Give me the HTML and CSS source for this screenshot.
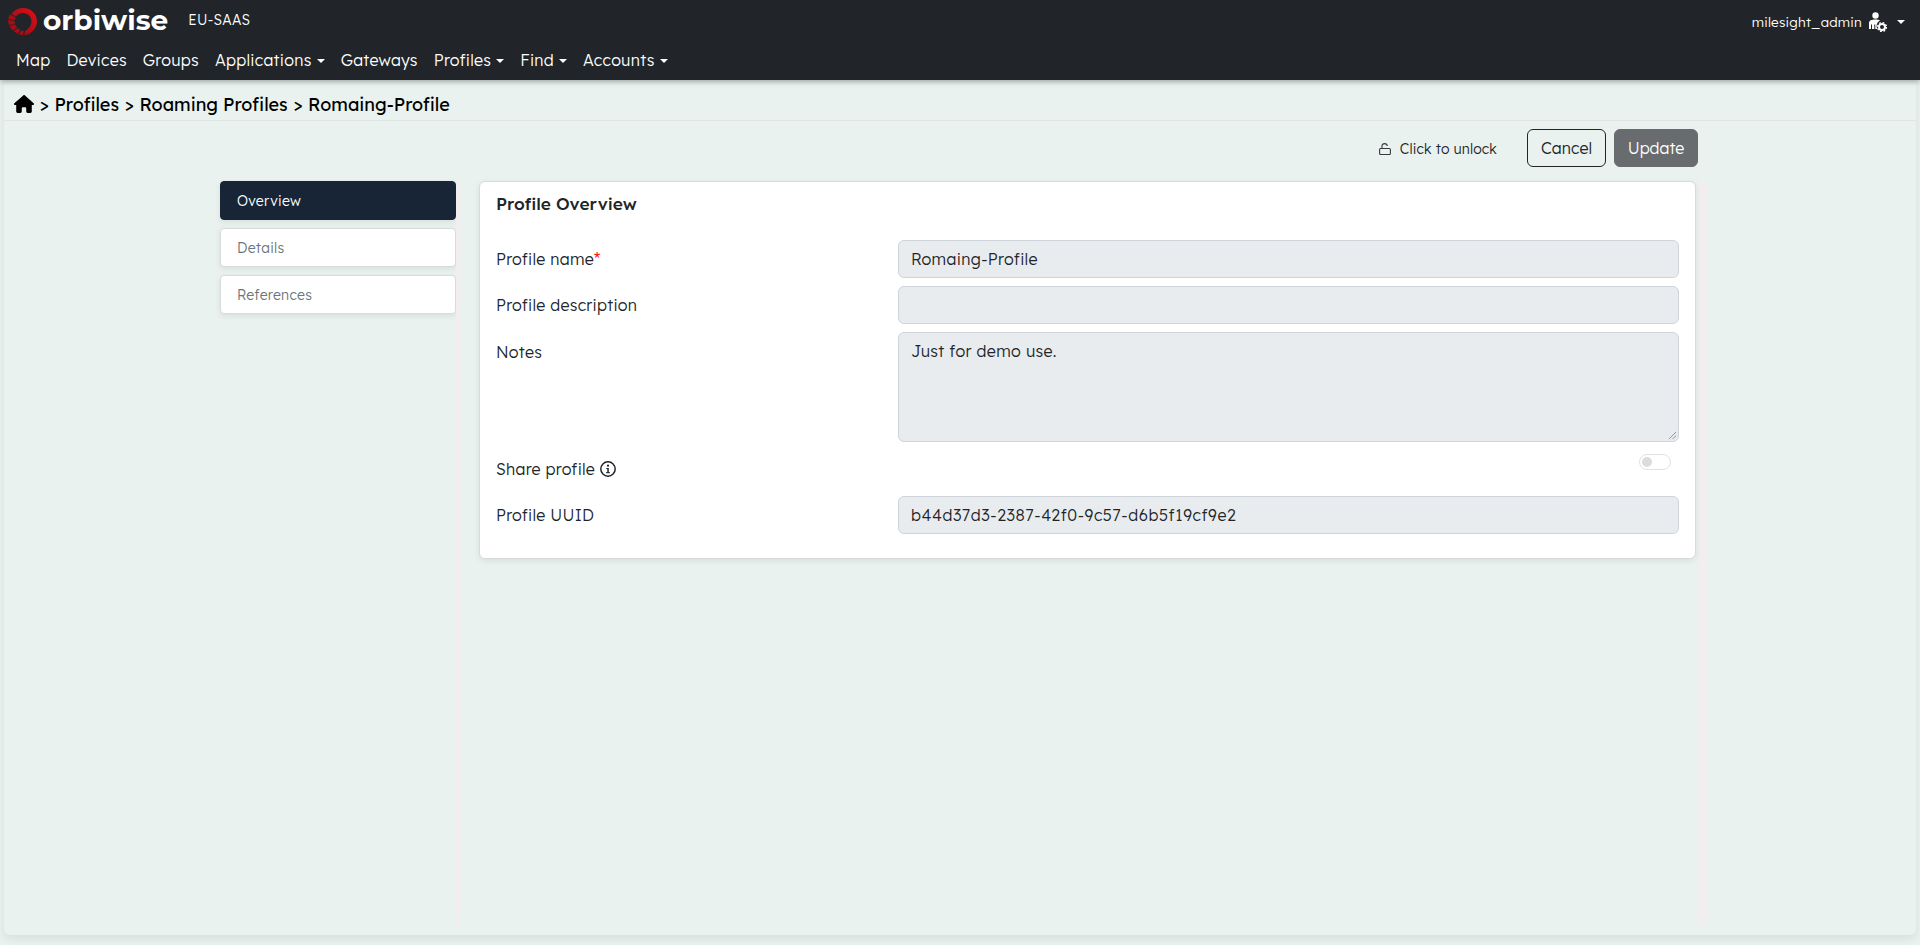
FILE: index.html
```html
<!DOCTYPE html>
<html lang="en">
<head>
<meta charset="utf-8">
<title>Roaming Profile</title>
<link rel="stylesheet" href="styles.css">
</head>
<body>
<header class="topbar">
  <div class="brand-row">
    <div class="brand">
      <svg class="logo-mark" viewBox="0 0 29 27" aria-hidden="true">
        <defs>
          <linearGradient id="ring" x1="1" y1="0" x2="0" y2="1">
            <stop offset="0" stop-color="#e01017"/>
            <stop offset="1" stop-color="#8f0c13"/>
          </linearGradient>
        </defs>
        <path d="M4 5C7 1.500 11 0 15 0C23 0 29 6 29 13C29 19 25.500 23.500 20 26.500L18.500 22C21.500 20 23.500 17 23.500 13.500C23.500 8.500 19.500 5 15 5C12 5 9.500 6.300 8 8.500L3.500 6Z" fill="url(#ring)"/>
        <path d="M1.500 6.500L7.500 9L6.800 12.200L.3 10.800ZM0 11.800L6.500 13L7.200 16.200L.8 16.800ZM1.500 17.800L7.500 16.800L9.200 19.700L4.200 22.500ZM5.500 23L10 20.200L12.200 21.800L10 26ZM11 26.500L13.300 22.300L15.700 23L15.200 27ZM16.300 27L16.800 23L19 22.300L20 26.500Z" fill="#a50e15"/>
      </svg>
      <span class="logo-word">orbiwise</span>
      <span class="tenant">EU-SAAS</span>
    </div>
    <div class="user">
      <span>milesight_admin</span>
      <svg class="user-icon" viewBox="0 0 18 20" aria-hidden="true">
        <circle cx="6.500" cy="3.500" r="3.200" fill="#fff"/>
        <path d="M0 17V11C0 8.500 2.500 7.500 6.500 7.500C8.500 7.500 10 7.800 11 8.400C9 9.600 7.600 11.500 7.600 14C7.600 15.100 7.800 16.100 8.300 17H6.300V12.500H5.300V17H3V12.500H2V17Z" fill="#fff"/>
        <circle cx="13" cy="15" r="3" fill="none" stroke="#fff" stroke-width="2"/>
        <circle cx="13" cy="15" r="4.500" fill="none" stroke="#fff" stroke-width="1.300" stroke-dasharray="1.800 1.730"/>
      </svg>
      <span class="caret user-caret"></span>
    </div>
  </div>
  <nav class="menu">
    <a>Map</a>
    <a>Devices</a>
    <a>Groups</a>
    <a>Applications<span class="caret"></span></a>
    <a>Gateways</a>
    <a>Profiles<span class="caret"></span></a>
    <a>Find<span class="caret"></span></a>
    <a>Accounts<span class="caret"></span></a>
  </nav>
</header>

<main class="page">
  <div class="crumbs">
    <svg class="home" viewBox="0 0 576 512" aria-hidden="true">
      <path d="M575.800 255.500c0 18-15 32.100-32 32.100h-32l.7 160.200c0 2.700-.2 5.400-.5 8.100V472c0 22.100-17.900 40-40 40H456c-1.100 0-2.200 0-3.300-.1c-1.400 .1-2.800 .1-4.200 .1H416 392c-22.100 0-40-17.900-40-40V448 384c0-17.700-14.300-32-32-32H256c-17.700 0-32 14.300-32 32v64 24c0 22.100-17.900 40-40 40H160 128.100c-1.500 0-3-.1-4.500-.2c-1.200 .1-2.400 .2-3.600 .2H104c-22.100 0-40-17.900-40-40V360c0-.9 0-1.900 .1-2.800V287.600H32c-18 0-32-14-32-32.100c0-9 3-17 10-24L266.400 8c7-7 15-8 22-8s15 2 21 7L564.800 231.500c8 7 12 15 11 24z" fill="#000"/>
    </svg>
    <span class="sep">&gt;</span><span>Profiles</span><span class="sep">&gt;</span><span>Roaming Profiles</span><span class="sep">&gt;</span><span>Romaing-Profile</span>
  </div>

  <div class="actions">
    <div class="unlock">
      <svg class="lock" viewBox="0 0 12 12" aria-hidden="true">
        <path d="M3 5.500V3C3 1.600 4.100 .6 5.600 .6S8.200 1.600 8.200 3" fill="none" stroke="#343a40" stroke-width="1.100"/>
        <rect x=".6" y="5.500" width="10.800" height="6" rx="1" fill="none" stroke="#343a40" stroke-width="1.100"/>
      </svg>
      <span>Click to unlock</span>
    </div>
    <button class="btn btn-cancel" type="button">Cancel</button>
    <button class="btn btn-update" type="button">Update</button>
  </div>

  <div class="layout">
    <aside class="tabs">
      <div class="tab tab-active">Overview</div>
      <div class="tab">Details</div>
      <div class="tab">References</div>
    </aside>
    <div class="panel-column">
      <div class="panel-inner">
        <section class="card">
          <h2 class="card-title">Profile Overview</h2>
          <div class="form">
            <label class="row">
              <span class="label">Profile name<span class="req">*</span></span>
              <span class="input">Romaing-Profile</span>
            </label>
            <label class="row">
              <span class="label">Profile description</span>
              <span class="input"></span>
            </label>
            <label class="row row-top">
              <span class="label">Notes</span>
              <span class="input textarea">Just for demo use.
                <svg class="grip" viewBox="0 0 10 10" aria-hidden="true"><path d="M1 9L9 1M5 9L9 5" stroke="#555" stroke-width="1" stroke-dasharray="1 .6" fill="none"/></svg>
              </span>
            </label>
            <div class="row row-share">
              <span class="label">Share profile
                <svg class="info" viewBox="0 0 16 16" aria-hidden="true">
                  <circle cx="8" cy="8" r="7.200" fill="none" stroke="#212529" stroke-width="1.500"/>
                  <circle cx="8" cy="4.700" r="1.100" fill="#212529"/>
                  <path d="M6.300 7H8.800V11.200H10V12.200H6V11.200H7.300V8H6.300Z" fill="#212529"/>
                </svg>
              </span>
              <span class="switch"><span class="knob"></span></span>
            </div>
            <label class="row">
              <span class="label">Profile UUID</span>
              <span class="input input-uuid">b44d37d3-2387-42f0-9c57-d6b5f19cf9e2</span>
            </label>
          </div>
        </section>
      </div>
    </div>
  </div>
</main>
</body>
</html>
```
FILE: styles.css
```css
* { box-sizing: border-box; }
html, body { height: 100%; }
body {
  margin: 0;
  height: 945px;
  overflow: hidden;
  background: #e9f2ee;
  color: #212529;
  font-family: "Lexend", "Lato", "Noto Sans", sans-serif;
  font-size: 16px;
  font-weight: 300;
  letter-spacing: .27px;
}
.topbar {
  position: relative;
  z-index: 2;
  height: 80px;
  background: #212529;
  color: #fff;
  box-shadow: 0 2px 5px rgba(0,0,0,.3);
}
.brand-row {
  height: 40px;
  display: flex;
  justify-content: space-between;
  align-items: center;
}
.brand { display: flex; align-items: center; padding-left: 8px; }
.logo-mark { width: 29px; height: 27px; margin-top: 3px; }
.logo-word {
  margin-left: 6px;
  font-family: "Montserrat", "Lato", sans-serif;
  font-weight: 700;
  font-size: 28px;
  line-height: 36px;
  letter-spacing: 0;
  color: #fff;
}
.tenant { margin-left: 20px; font-size: 14px; }
.user { display: flex; align-items: center; padding: 3px 15px 0 0; font-size: 13.5px; letter-spacing: .2px; }
.user-icon { width: 18px; height: 20px; margin-left: 7px; }
.caret {
  display: inline-block;
  margin-left: 5px;
  vertical-align: 3px;
  border-top: 4px solid #fff;
  border-left: 4px solid transparent;
  border-right: 4px solid transparent;
}
.user-caret { margin-left: 10px; }
.menu { height: 40px; display: flex; align-items: center; padding-left: 16px; gap: 16px; }
.menu a { color: #fff; font-size: 16px; }
.page {
  height: 855px;
  margin: 0 4px;
  border-radius: 0 0 6px 6px;
  box-shadow: 0 4px 10px rgba(0,0,0,.08);
  background: #e9f2ee;
  padding-bottom: 9px;
  display: flex;
  flex-direction: column;
}
.crumbs {
  height: 41px;
  display: flex;
  align-items: center;
  gap: 5.5px;
  padding: 8px 0 0 10px;
  border-bottom: 1px solid #dfe5e2;
  font-size: 18px;
  font-weight: 400;
  letter-spacing: 0;
  color: #000;
}
.home { width: 20px; height: 18px; }
.actions {
  height: 60px;
  display: flex;
  align-items: center;
  justify-content: flex-end;
  padding: 0 218px 6px 0;
}
.unlock { display: flex; align-items: center; font-size: 14px; margin: 2px 30px 0 0; letter-spacing: .13px; }
.lock { width: 12px; height: 12px; margin-right: 9px; }
.btn {
  height: 38px;
  border-radius: 6px;
  font: inherit;
  letter-spacing: 0;
  padding: 0 12px;
}
.btn-cancel { width: 79px; background: transparent; border: 1px solid #212529; color: #212529; }
.btn-update { width: 84px; margin-left: 8px; background: #686c6e; border: 1px solid #686c6e; color: #fff; }
.layout {
  flex: 1;
  display: flex;
  padding-left: 216px;
}
.tabs {
  width: 236px;
  display: flex;
  flex-direction: column;
  gap: 8px;
}
.tab {
  height: 39px;
  padding-left: 16px;
  display: flex;
  align-items: center;
  background: #fff;
  border: 1px solid #d8dbdd;
  border-radius: 4px;
  color: #6c757d;
  font-size: 14px;
  box-shadow: 0 2px 6px rgba(0,0,0,.08);
}
.tab-active { background: #182536; border-color: #182536; color: #fff; }
.panel-column {
  width: 1251px;
  padding: 0 9px 0 5px;
  background: #f0eeee;
}
.panel-inner {
  height: 100%;
  padding: 0 2px 0 18px;
  background: #e9f2ee;
}
.card {
  background: #fff;
  border: 1px solid #d8dbdd;
  border-radius: 6px;
  padding: 11px 16px 24px;
  box-shadow: 0 2px 6px rgba(0,0,0,.08);
}
.card-title { margin: 0 0 25px; font-size: 17.25px; font-weight: 500; line-height: 22px; letter-spacing: 0; }
.form { display: flex; flex-direction: column; gap: 8px; }
.row { display: grid; grid-template-columns: 402px 1fr; align-items: center; }
.row-top { align-items: start; }
.row-top .label { padding-top: 10px; }
.row-share { height: 38px; }
.label { font-size: 16px; display: flex; align-items: center; gap: 5px; }
.req { color: #f00; margin-left: -5px; font-family: "Liberation Sans", sans-serif; }
.input {
  position: relative;
  height: 38px;
  background: #e9ecef;
  border: 1px solid #ced4da;
  border-radius: 6px;
  padding: 0 12px;
  display: flex;
  align-items: center;
  font-size: 16px;
  letter-spacing: .33px;
}
.input-uuid { letter-spacing: .57px; }
.textarea { height: 110px; align-items: flex-start; padding-top: 8px; }
.grip { position: absolute; right: 1px; bottom: 1px; width: 9px; height: 9px; }
.info { width: 16px; height: 16px; }
.switch {
  justify-self: end;
  margin: 0 8px 14px 0;
  width: 32px;
  height: 16px;
  border: 1px solid #dee2e6;
  border-radius: 8px;
  background: #fff;
  display: flex;
  align-items: center;
  padding-left: 2px;
}
.knob { width: 10px; height: 10px; border-radius: 50%; background: #dcdcdc; }
```
